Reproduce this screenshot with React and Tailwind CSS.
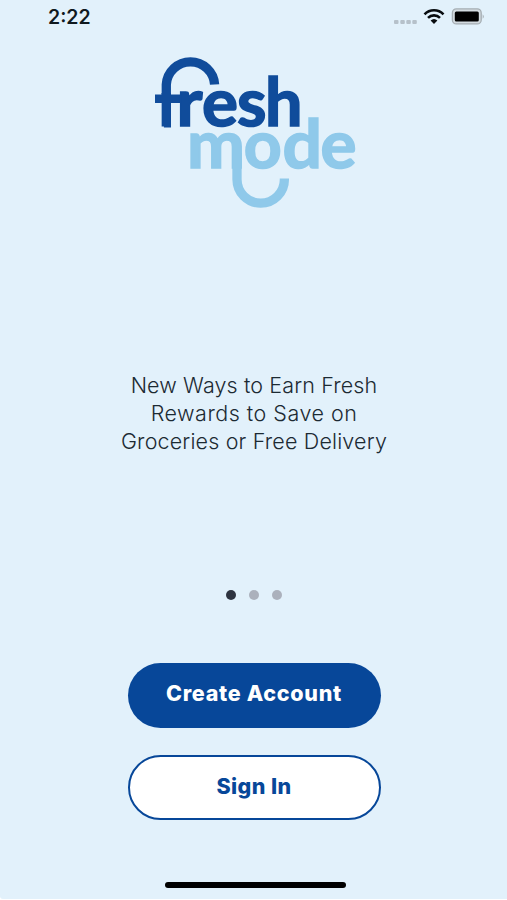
const SLIDES = [0, 1, 2];

const FRESH = [
  { char: 'r', x: 176.5, width: 26 },
  { char: 'e', x: 202, width: 36 },
  { char: 's', x: 237, width: 29.5 },
  { char: 'h', x: 265, width: 37.5 },
];

const MODE = [
  { char: 'm', x: 187, width: 58 },
  { char: 'o', x: 243.8, width: 38 },
  { char: 'd', x: 282.5, width: 39.5 },
  { char: 'e', x: 320.5, width: 36 },
];

function Letters({ letters, y }) {
  return letters.map((l) => (
    <text key={l.x} x={l.x} y={y} textLength={l.width} lengthAdjust="spacingAndGlyphs">
      {l.char}
    </text>
  ));
}

function Logo() {
  return (
    <svg
      viewBox="150 50 212 165"
      className="h-[165px] w-[212px] font-['Lato',sans-serif] text-[66px] font-bold"
      role="img"
      aria-label="fresh mode"
    >
      <g fill="#8fc9ea" stroke="#8fc9ea">
        <g strokeWidth="1.6">
          <Letters letters={MODE} y={169} />
        </g>
        <path d="M237 154V180.5A23.7 23.7 0 0 0 284.4 180.500V179.500" fill="none" strokeWidth="9.3" />
      </g>
      <g fill="#104c9b" stroke="#104c9b">
        <clipPath id="f-base">
          <rect x="161.600" y="94" width="9.400" height="36" />
        </clipPath>
        <text x="158" y="127.5" clipPath="url(#f-base)">f</text>
        <path d="M166.3 127.5V85.5A24.2 24.2 0 0 1 214.6 85.5" fill="none" strokeWidth="9.3" />
        <path d="M155 99.8H188" strokeWidth="8.600" />
        <g strokeWidth="1.6">
          <Letters letters={FRESH} y={127.3} />
        </g>
      </g>
    </svg>
  );
}

function StatusBar() {
  return (
    <div className="flex h-[34px] items-center justify-between pr-[22px] pl-12">
      <span className="pt-0.5 text-[19.5px] leading-none font-semibold text-[#10191f]">2:22</span>
      <svg viewBox="0 0 92 20" className="h-5 w-[92px]">
        <g fill="#b6c1ca">
          <rect x="1" y="13" width="4.5" height="4" rx="1" />
          <rect x="7.3" y="13" width="4.5" height="4" rx="1" />
          <rect x="13.3" y="13" width="4.5" height="4" rx="1" />
          <rect x="19.3" y="13" width="4.5" height="4" rx="1" />
        </g>
        <g fill="none" stroke="#080c0f" strokeWidth="2.6">
          <path d="M31.5 7.3A13.3 13.3 0 0 1 50.5 7.3" />
          <path d="M35 10.9A8.5 8.5 0 0 1 47 10.9" />
        </g>
        <path d="M37.6 13.6A5 5 0 0 1 44.4 13.6L41 17Z" fill="#080c0f" />
        <rect x="59.4" y="1.9" width="28.8" height="15" rx="4" fill="#d3dbe0" stroke="#a5adb2" strokeWidth="1.3" />
        <rect x="61.8" y="4.4" width="24" height="10" rx="1.5" fill="#000" />
        <path d="M89.7 7.2Q91.9 9.5 89.7 11.8Z" fill="#a5adb2" />
      </svg>
    </div>
  );
}

export default function App() {
  return (
    <div className="h-[900px] w-full bg-white">
      <main className="flex h-[899px] flex-col rounded-bl-[3px] bg-[#e2f1fb] font-['Inter',sans-serif]">
        <StatusBar />

        <header className="mt-[15px] flex pl-[150px]">
          <Logo />
        </header>

        <p className="mt-[157px] pl-px text-center text-[21.5px] leading-7 font-light text-[#1c2a33]">
          <span className="tracking-[0.12px]">New Ways to Earn Fresh</span>
          <br />
          <span className="tracking-[0.5px]">Rewards to Save on</span>
          <br />
          <span className="tracking-[0.16px]">Groceries or Free Delivery</span>
        </p>

        <div className="mt-[135px] flex justify-center gap-[13px] pl-px">
          {SLIDES.map((i) => (
            <span key={i} className={`size-[10px] rounded-full ${i === 0 ? 'bg-[#2e3440]' : 'bg-[#abb1bc]'}`} />
          ))}
        </div>

        <div className="mt-[63px] flex flex-col items-center gap-[27px] pl-px">
          <button className="h-[65px] w-[253px] rounded-full bg-[#074799] pb-1 text-[21.5px] font-extrabold tracking-[0.7px] text-white">
            Create Account
          </button>
          <button className="h-[65px] w-[253px] rounded-full border-2 border-[#074799] bg-white pb-[3px] text-[21.5px] font-extrabold tracking-[0.4px] text-[#074799]">
            Sign In
          </button>
        </div>

        <div className="mt-auto mb-[11px] ml-[165px] h-[6px] w-[181px] rounded-full bg-black" />
      </main>
    </div>
  );
}
